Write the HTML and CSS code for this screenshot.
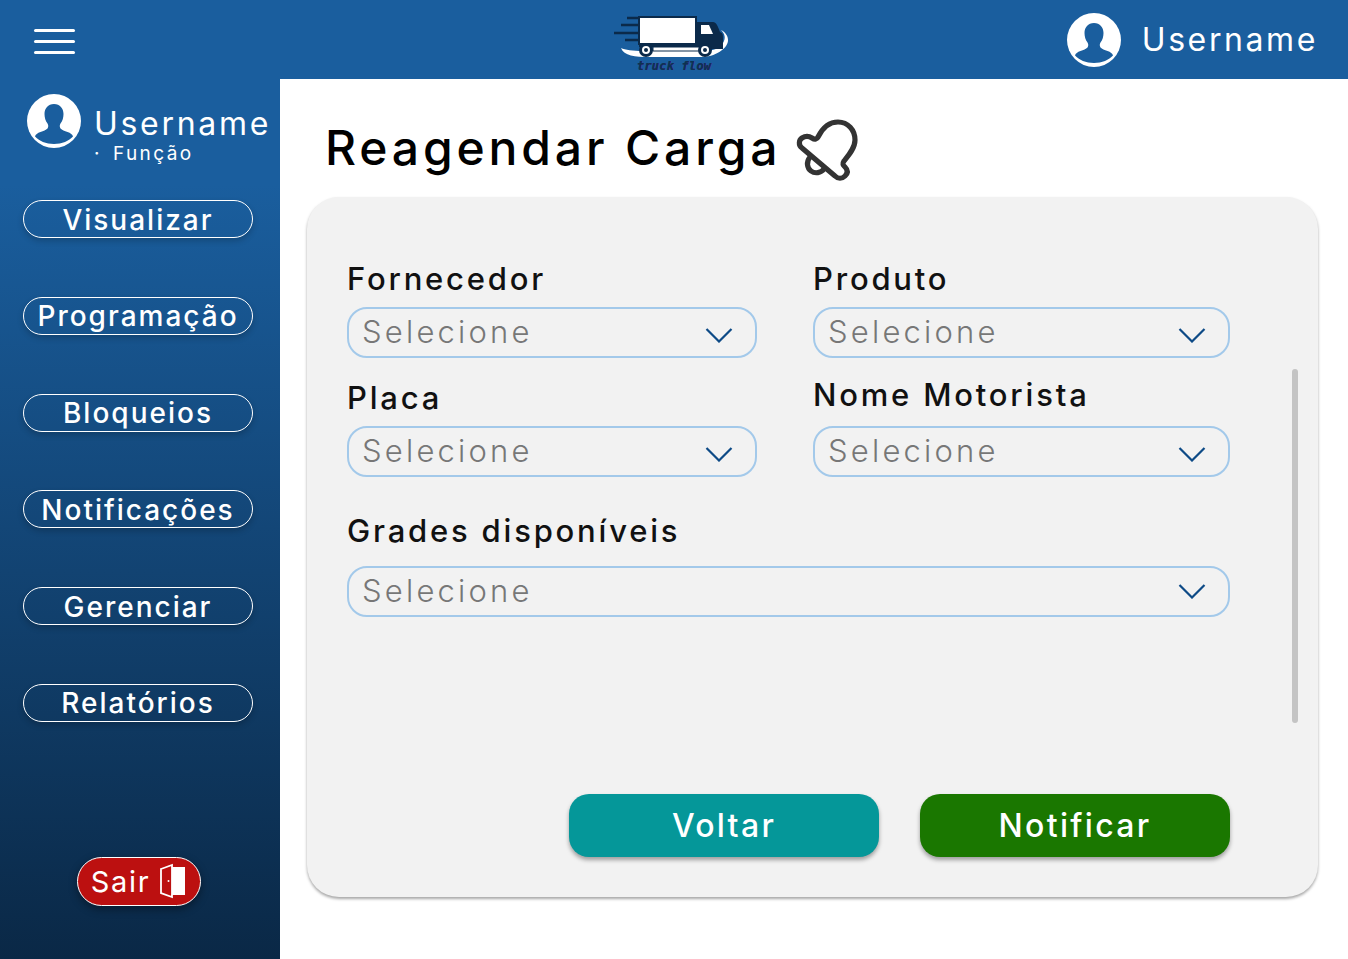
FILE: index.html
```html
<!DOCTYPE html>
<html lang="pt-BR">
<head>
    <meta charset="UTF-8">
    <meta name="viewport" content="width=device-width, initial-scale=1.0">
    <title>Reagendar Carga</title>
    <link rel="stylesheet" href="styles.css">
</head>
<body>
    <svg width="0" height="0" class="defs">
        <symbol id="avatar" viewBox="0 0 54 54">
            <circle cx="27" cy="27" r="27" fill="#fff"/>
            <path fill="#1a5e9e" d="M27 10c-6 0-9.500 4.500-9.500 10 0 3.500 1 7 3 9.500 1 1.500 1 3.500 0 5-1.500 1.500-4 2.500-7 3.500-3 1-5 2.500-5.500 4.500C12 47 19 50 27 50s15-3 19-7.500c-.5-2-2.500-3.500-5.500-4.500-3-1-5.500-2-7-3.500-1-1.500-1-3.500 0-5 2-2.500 3-6 3-9.500 0-5.500-3.500-10-9.500-10z"/>
        </symbol>
        <symbol id="chevron" viewBox="0 0 28 16">
            <path d="M1.500 2 14 14.500 26.500 2" fill="none" stroke="#0d4a86" stroke-width="2.200"/>
        </symbol>
    </svg>

    <header class="topbar">
        <div class="burger"><span></span><span></span><span></span></div>
        <div class="logo">
            <svg width="118" height="56" viewBox="0 0 118 56">
                <path d="M8 34c3 8 14 9 28 9h52c14 0 26-8 27-16 .5-5-3-9-7-11 4 4 5 8 2 13-3 5-10 8-18 8H30c-10 0-18-1-22-3z" fill="#fff"/>
                <path d="M14 4h12M8 11h18M1 19h25M12 26h14" stroke="#0b2a4a" stroke-width="2.500"/>
                <rect x="26" y="3" width="57" height="27" fill="#fff" stroke="#0b2a4a" stroke-width="2"/>
                <path d="M84 8h16c3 0 5 4 7 10 3 1 3 3 3 7v10H84z" fill="#0b2a4a"/>
                <path d="M88 11h8l4 9H88z" fill="#fff"/>
                <rect x="26" y="30" width="84" height="3" fill="#0b2a4a"/>
                <rect x="40" y="33" width="50" height="4" fill="#fff" stroke="#0b2a4a"/>
                <circle cx="33" cy="36" r="7" fill="#0b2a4a"/><circle cx="33" cy="36" r="4" fill="#fff"/><circle cx="33" cy="36" r="2" fill="#0b2a4a"/>
                <circle cx="92" cy="36" r="7" fill="#0b2a4a"/><circle cx="92" cy="36" r="4" fill="#fff"/><circle cx="92" cy="36" r="2" fill="#0b2a4a"/>
            </svg>
            <span class="logo-text">truck flow</span>
        </div>
        <div class="user-top">
            <svg class="avatar"><use href="#avatar"/></svg>
            <span>Username</span>
        </div>
    </header>

    <div class="page">
        <aside class="sidebar">
            <div class="profile">
                <svg class="avatar"><use href="#avatar"/></svg>
                <div>
                    <div class="profile-name">Username</div>
                    <div class="profile-role"><span class="dot">·</span>Função</div>
                </div>
            </div>
            <nav class="menu">
                <a href="#">Visualizar</a>
                <a href="#">Programação</a>
                <a href="#">Bloqueios</a>
                <a href="#">Notificações</a>
                <a href="#">Gerenciar</a>
                <a href="#">Relatórios</a>
            </nav>
            <button class="btn-sair">
                Sair
                <svg width="28" height="36" viewBox="0 0 28 36">
                    <path d="M2 6 13 2v32L2 30z" fill="none" stroke="#fff" stroke-width="1.800"/>
                    <path d="M13 4h13v28H13z" fill="#fff"/>
                    <circle cx="9.500" cy="18" r="1" fill="#fff"/>
                </svg>
            </button>
        </aside>

        <main class="content">
            <div class="title-row">
                <h1>Reagendar Carga</h1>
                <svg width="66" height="66" viewBox="14 12 66 66">
                    <path d="M21 43C17 40 18 35 21 33C24 31 28 31 31 33C34 35 36 34 37 32C41 24 47 17 57 17C67 17 74 25 74 35C74 43 68 50 63 56C61 59 62 60 64 62C67 65 67 68 64 71C61 74 57 74 54 71Z" fill="none" stroke="#333" stroke-width="5.200" stroke-linejoin="round"/>
                    <path d="M29 52C25 57 26 63 30 66C34 69 40 68 43 64" fill="none" stroke="#333" stroke-width="5.200" stroke-linecap="round"/>
                </svg>
            </div>

            <section class="card">
                <div class="scrollbar"></div>
                <div class="form-cols">
                    <div class="col-left">
                        <label>Fornecedor</label>
                        <div class="select"><span>Selecione</span><svg class="chev"><use href="#chevron"/></svg></div>
                        <label class="lbl-placa">Placa</label>
                        <div class="select"><span>Selecione</span><svg class="chev"><use href="#chevron"/></svg></div>
                    </div>
                    <div class="col-right">
                        <label>Produto</label>
                        <div class="select"><span>Selecione</span><svg class="chev"><use href="#chevron"/></svg></div>
                        <label class="lbl-motorista">Nome Motorista</label>
                        <div class="select"><span>Selecione</span><svg class="chev"><use href="#chevron"/></svg></div>
                    </div>
                </div>
                <label class="lbl-grades">Grades disponíveis</label>
                <div class="select select-wide"><span>Selecione</span><svg class="chev"><use href="#chevron"/></svg></div>
                <div class="actions">
                    <button class="btn btn-voltar">Voltar</button>
                    <button class="btn btn-notificar">Notificar</button>
                </div>
            </section>
        </main>
    </div>
</body>
</html>
```

FILE: styles.css
```css
* {
    box-sizing: border-box;
}
body {
    margin: 0;
    height: 959px;
    overflow: hidden;
    background: #fff;
    font-family: Inter, "Liberation Sans", sans-serif;
}
.defs {
    position: absolute;
}

/* barra de cima */
.topbar {
    height: 79px;
    background: #1a5e9e;
    display: flex;
    align-items: center;
    justify-content: space-between;
    padding: 0 30px 0 34px;
    color: #fff;
}
.burger {
    width: 41px;
    display: flex;
    flex-direction: column;
    gap: 8px;
    margin-top: 3px;
}
.burger span {
    height: 3px;
    background: #fff;
    border-radius: 2px;
}
.logo {
    width: 118px;
    height: 74px;
    margin-left: 202px;
    display: flex;
    flex-direction: column;
    align-items: center;
    padding-top: 11px;
}
.logo-text {
    font-family: "DejaVu Sans Mono", monospace;
    font-size: 12px;
    font-style: italic;
    font-weight: bold;
    color: #0b3350;
    margin: -11px 0 0 4px;
    letter-spacing: .2px;
    text-shadow: .5px 0 #4a1a80;
}
.user-top {
    display: flex;
    align-items: center;
    gap: 21px;
    font-size: 32px;
    letter-spacing: 2.600px;
}
.avatar {
    width: 54px;
    height: 54px;
    flex: none;
}

/* lateral */
.page {
    display: flex;
    height: 880px;
}
.sidebar {
    width: 280px;
    flex: none;
    background: linear-gradient(180deg, #1a5e9e 0%, #1a5e9e 12%, #0a2846 100%);
    padding: 15px 27px 0 23px;
    color: #fff;
}
.profile {
    display: flex;
    gap: 13px;
    margin-left: 4px;
    height: 106px;
}
.profile-name {
    font-size: 32px;
    letter-spacing: 2.700px;
    line-height: 34px;
    margin-top: 13px;
    white-space: nowrap;
}
.profile-role {
    font-size: 19px;
    letter-spacing: 2.400px;
    line-height: 24px;
    margin-top: 1px;
}
.dot {
    display: inline-block;
    width: 19px;
}
.menu {
    display: flex;
    flex-direction: column;
    gap: 58.800px;
}
.menu a {
    height: 38px;
    padding-top: 1px;
    border: 1px solid #fff;
    border-radius: 19px;
    color: #fff;
    text-decoration: none;
    font-size: 28px;
    font-weight: 500;
    letter-spacing: 2px;
    display: flex;
    align-items: center;
    justify-content: center;
    white-space: nowrap;
    box-shadow: 0 3px 6px rgba(0, 0, 0, .2);
}
.btn-sair {
    display: flex;
    align-items: center;
    justify-content: center;
    gap: 9px;
    width: 124px;
    height: 49px;
    margin: 135px 0 0 54px;
    background: #bc1010;
    border: 1px solid #fff;
    border-radius: 25px;
    color: #fff;
    font-family: inherit;
    font-size: 29px;
    letter-spacing: 1.700px;
    box-shadow: 0 3px 8px rgba(0, 0, 0, .4);
}

/* conteudo */
.content {
    flex: 1;
    padding: 38px 30px 0 27px;
}
.title-row {
    display: flex;
    align-items: center;
    height: 66px;
    margin-left: 18px;
    gap: 14px;
}
h1 {
    margin: 0 0 6px;
    font-size: 48px;
    font-weight: 500;
    letter-spacing: 3.850px;
    color: #000;
}
.card {
    position: relative;
    height: 700px;
    margin-top: 14px;
    padding: 61px 88px 0 40px;
    background: #f2f2f2;
    border-radius: 32px;
    box-shadow: 0 2px 3px rgba(0, 0, 0, .35);
}
.scrollbar {
    position: absolute;
    left: 985px;
    top: 172px;
    width: 6px;
    height: 354px;
    background: #c4c4c4;
    border-radius: 3px;
}
.form-cols {
    display: flex;
    justify-content: space-between;
}
.col-left {
    width: 410px;
}
.col-right {
    width: 417px;
}
label {
    display: block;
    font-size: 31px;
    font-weight: 500;
    letter-spacing: 2.800px;
    line-height: 41px;
    margin-bottom: 8px;
    color: #111;
}
.lbl-placa {
    margin-top: 19px;
}
.lbl-motorista {
    margin-top: 16px;
    margin-bottom: 11px;
}
.lbl-grades {
    margin-top: 33px;
    margin-bottom: 15px;
}
.select {
    height: 51px;
    margin-top: 7px;
    border: 2px solid #a3c9ea;
    border-radius: 20px;
    padding: 0 22px 2px 13px;
    display: flex;
    align-items: center;
    justify-content: space-between;
    font-size: 31px;
    font-weight: 300;
    letter-spacing: 3.200px;
    color: #777;
}
.chev {
    width: 28px;
    height: 16px;
    margin-top: 6px;
}
.select-wide .chev {
    margin-top: 0;
}
.actions {
    display: flex;
    justify-content: flex-end;
    gap: 41px;
    margin-top: 177px;
}
.btn {
    width: 310px;
    height: 63px;
    border: none;
    border-radius: 20px;
    color: #fff;
    font-family: inherit;
    font-size: 32px;
    font-weight: 500;
    letter-spacing: 2.300px;
    box-shadow: 0 3px 4px rgba(0, 0, 0, .35);
}
.btn-voltar {
    background: #059799;
}
.btn-notificar {
    background: #1a7700;
}
```
